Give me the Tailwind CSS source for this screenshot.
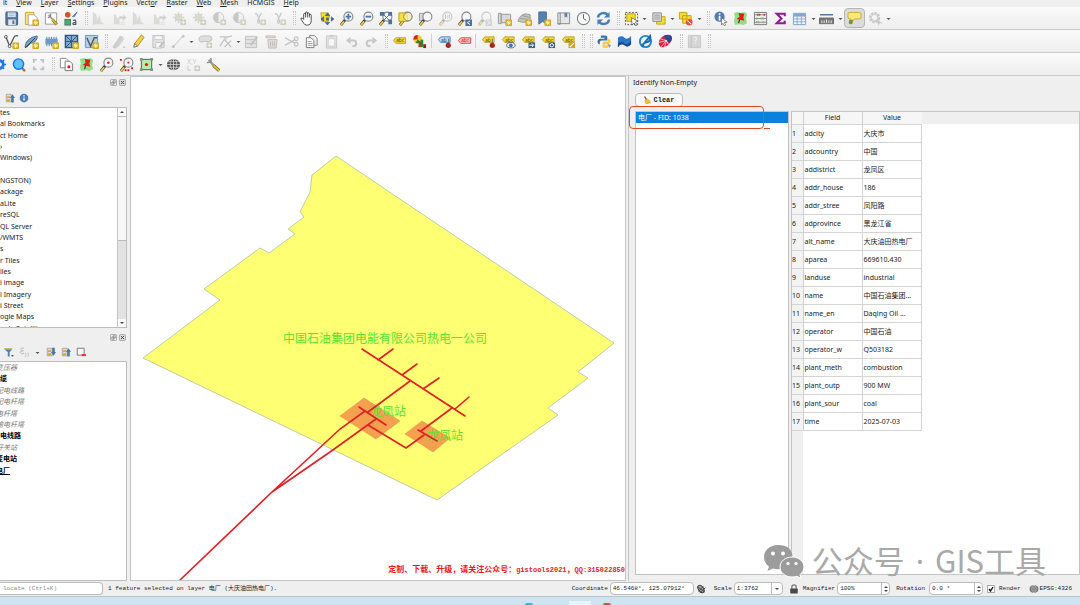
<!DOCTYPE html>
<html lang="en">

<head>
    <meta charset="UTF-8">
    <meta name="viewport" content="width=device-width, initial-scale=1.0">
    <title>QGIS - Identify Non-Empty</title>
    <script src="https://cdn.jsdelivr.net/npm/@tailwindcss/browser@4"></script>
</head>

<body class="relative flex h-screen flex-col overflow-hidden bg-[#efefef] font-['Noto_Sans','Noto_Sans_CJK_SC',sans-serif] text-[7px] leading-[11px] text-[#222]">
    <!-- Icon sprite -->
    <svg class="hidden" xmlns="http://www.w3.org/2000/svg">
        <g id="new"><rect x="9" y="9" width="7" height="7" rx="1" fill="#d0a91c" /><path d="M12.500 10v5M10 12.500h5M10.800 10.800l3.400 3.400M14.200 10.800l-3.400 3.400" stroke="#fff3a8" stroke-width="1" /></g>
        <g id="plus"><rect x="9" y="9" width="6" height="6" rx="1" fill="#8d9a70" /><path d="M12 10v4M10 12h4" stroke="#fff" /></g>
        <g id="lens"><path d="M7 9L2 15" stroke="#3b3b3b" stroke-width="3" /><path d="M5.500 11L2 15" stroke="#e8c53c" stroke-width="2" /><circle cx="10" cy="6" r="4.800" fill="#f3f6f8" stroke="#888" stroke-width="1.200" /></g>

        <symbol id="save" viewBox="0 0 16 16"><rect x="2" y="1" width="12.500" height="14" rx="1" fill="#54789d" stroke="#3c5c7e" /><rect x="4" y="1.500" width="8.500" height="5" fill="#dce9f5" /><path d="M5 3h6M5 5h6" stroke="#88a" stroke-width=".6" /><rect x="4.500" y="9" width="8" height="6" fill="#e4e4e4" /><rect x="9" y="10" width="2" height="4" fill="#54789d" /></symbol>
        <symbol id="newlayout" viewBox="0 0 16 16"><path d="M1.500 1.500h9v13h-9z" fill="#fbe37c" stroke="#cfa41e" /><path d="M4.500 4h6l3.500 3v8h-9.500z" fill="#fff" stroke="#a5a5a5" /><use href="#new" /></symbol>
        <symbol id="layoutmgr" viewBox="0 0 16 16"><path d="M1.500 2h12v12h-12z" fill="#fff" stroke="#999" /><path d="M5 4l5 6" stroke="#8a8a8a" stroke-width="1.600" /><path d="M7 3q1 3-3 4" fill="none" stroke="#888" stroke-width="1.300" /><path d="M9 9l4.500 5.500" stroke="#6a5a20" stroke-width="3" /><path d="M9 9l4.500 5.500" stroke="#dfb92c" stroke-width="2" /></symbol>
        <symbol id="style" viewBox="0 0 16 16"><circle cx="4" cy="4" r="3" fill="#cf5722" /><path d="M9 6q1-1 5-5l-3 5z" fill="#5b7fa7" stroke="#5b7fa7" /><rect x="1" y="9" width="6" height="6" fill="#56a677" stroke="#3a7e58" /><path d="M9.500 10q3-1 3 1v4M12.500 12q-3 0-3 1.500t3 .5" fill="none" stroke="#555" stroke-width="1.300" /></symbol>
        <symbol id="hist" viewBox="0 0 16 16"><path d="M2 2v12h12L10 12 8 4 6 9 4 3z" fill="#b5bda8" /><path d="M1.500 1v14" stroke="#aaa" /></symbol>
        <symbol id="hist2" viewBox="0 0 16 16"><path d="M2 4v10h6V6L6 8 4 4z" fill="#b5bda8" /><path d="M8 6h5l-1-2 3 3-3 3v-2H8zM8 14h6M8 12h6" fill="#999" stroke="#999" stroke-width=".5" /></symbol>
        <symbol id="sun" viewBox="0 0 16 16"><g stroke="#a9a88e"><path d="M7 1v12M1 7h12M3 3l8 8M11 3l-8 8" stroke-width="1.500" /><circle cx="7" cy="7" r="3.500" fill="#b3b28f" /></g><use href="#plus" /></symbol>
        <symbol id="contrast" viewBox="0 0 16 16"><circle cx="7" cy="7" r="5.500" fill="#eee" stroke="#888" /><path d="M7 1.500a5.500 5.500 0 000 11z" fill="#888" /><use href="#plus" /></symbol>
        <symbol id="gamma" viewBox="0 0 16 16"><path d="M3 3q3-1 4 5l3-6M7 8q-2 5 0 5t0-5" fill="none" stroke="#888" stroke-width="1.300" /><use href="#plus" /></symbol>
        <symbol id="hand" viewBox="0 0 16 16"><path d="M5 9V3.500q0-1 1-1t1 1V2q0-1 1-1t1 1v1q0-1 1-1t1 1v1.500q0-1 1-1t1 1V10q0 5-4 5H8q-2 0-3-2L2 8.500q0-1.500 1.500-1z" fill="#fff" stroke="#333" stroke-width=".9" /><path d="M7 3v4M9 3v4M11 4v3" stroke="#333" stroke-width=".8" /></symbol>
        <symbol id="panto" viewBox="0 0 16 16"><path d="M2 2h8l1 3-1 6H3z" fill="#f9e02c" stroke="#c2a71c" /><path d="M9 2l2.500 3h-5zM9 15l2.500-3h-5zM2 8.500L5 6v5zM16 8.500L13 6v5z" fill="#44638d" stroke="#2e4f7b" stroke-width=".5" /><rect x="7.500" y="7" width="3" height="3" fill="#44638d" /></symbol>
        <symbol id="zoomin" viewBox="0 0 16 16"><use href="#lens" /><path d="M10 3v6M7 6h6" stroke="#4a79ae" stroke-width="2" /></symbol>
        <symbol id="zoomout" viewBox="0 0 16 16"><use href="#lens" /><path d="M7 6h6" stroke="#4a79ae" stroke-width="2" /></symbol>
        <symbol id="zoomfull" viewBox="0 0 16 16"><use href="#lens" /><path d="M2 1h5v4H2zM11 1h4v4h-4zM11 9h4v5h-4z" fill="#4c719c" /><path d="M5 3l8 8M13 3L6 10" stroke="#4c719c" /></symbol>
        <symbol id="zoomsel" viewBox="0 0 16 16"><use href="#lens" /><path d="M1 2h9v9H1z" fill="#f8df3a" stroke="#b89f1d" /><circle cx="10.500" cy="6" r="4.500" fill="#f8ecaa" fill-opacity=".8" stroke="#888" /></symbol>
        <symbol id="zoomlayer" viewBox="0 0 16 16"><path d="M1.500 2.500h8v8h-8z" fill="#d9d9d9" stroke="#999" /><use href="#lens" /></symbol>
        <symbol id="zoomnative" viewBox="0 0 16 16"><use href="#lens" /><path d="M8 4v4M12 4v4M10 5v1M10 7v1" stroke="#666" /></symbol>
        <symbol id="zoomlast" viewBox="0 0 16 16"><use href="#lens" /><rect x="9" y="9" width="7" height="7" fill="#4c719c" /><path d="M14 10.500l-3 2 3 2" fill="none" stroke="#fff" /></symbol>
        <symbol id="zoomnext" viewBox="0 0 16 16"><use href="#lens" /><rect x="9" y="9" width="7" height="7" fill="#aaa" /><path d="M11 10.500l3 2-3 2" fill="none" stroke="#fff" /></symbol>
        <symbol id="newmap" viewBox="0 0 16 16"><path d="M1.500 2.500h3v11h-3zM4.500 3.500h10v9h-10z" fill="#dadada" stroke="#999" /><use href="#new" /></symbol>
        <symbol id="new3d" viewBox="0 0 16 16"><path d="M1 11q2-7 8-8l5 1v8H6z" fill="#c6c6c0" stroke="#999" /><path d="M3 8l9 1M6 5l8 2" stroke="#999" /><use href="#new" /></symbol>
        <symbol id="newbook" viewBox="0 0 16 16"><path d="M3 1h8v13l-4-3-4 3z" fill="#5682b1" stroke="#416a96" /><use href="#new" /></symbol>
        <symbol id="books" viewBox="0 0 16 16"><path d="M2 2h2.500v12H2zM4.500 2h10v11.500H2" fill="#e6e6e6" stroke="#888" /><path d="M9 2h3v5l-1.500-1L9 7z" fill="#5682b1" /></symbol>
        <symbol id="clock" viewBox="0 0 16 16"><circle cx="8" cy="8" r="6.500" fill="#f8f8f8" stroke="#7d8790" stroke-width="1.200" /><path d="M8 3.500V8l3 2" fill="none" stroke="#555" /></symbol>
        <symbol id="refresh" viewBox="0 0 16 16"><path d="M2 7a6 6 0 0111-2M14 9a6 6 0 01-11 2" fill="none" stroke="#4a7fb8" stroke-width="2.500" /><path d="M14.500 1v6h-6zM1.500 15V9h6z" fill="#4a7fb8" /></symbol>
        <symbol id="select" viewBox="0 0 16 16"><path d="M1.500 1.500h13v13h-13z" fill="none" stroke="#555" stroke-dasharray="2 1.500" /><path d="M3 3h9v8H3z" fill="#f7dd2b" stroke="#b89f1d" /><path d="M8 7l7 4-3 .8 2 3-1.500 1-1.800-3L8.500 15z" fill="#fff" stroke="#444" stroke-width=".7" /></symbol>
        <symbol id="selval" viewBox="0 0 16 16"><path d="M6 6h9v8H6z" fill="#f7dd2b" stroke="#c0a51d" /><path d="M2 2h9v9H2z" fill="#ddd" stroke="#888" /><path d="M3.500 4.500h6M3.500 6.500h6M3.500 8.500h6" stroke="#999" /></symbol>
        <symbol id="desel" viewBox="0 0 16 16"><path d="M1.500 1.500h8v7h-8zM5 5h9v8H5z" fill="#f7dd2b" stroke="#bf9d1c" /><circle cx="12" cy="12" r="3.500" fill="#e34b42" /><path d="M10 10l4 4" stroke="#fff" stroke-width="1.200" /></symbol>
        <symbol id="identify" viewBox="0 0 16 16"><circle cx="7" cy="6" r="5.500" fill="#517eae" /><path d="M7 5v5M7 2.500v1.500" stroke="#fff" stroke-width="1.800" /><path d="M9 7l6 5-3 .4 1.500 2.500-1.500.8-1.400-2.600L9 15z" fill="#fff" stroke="#555" stroke-width=".7" /></symbol>
        <symbol id="pin" viewBox="0 0 16 16"><path d="M1 2l4-1 3 1 4-1 3 2-1 5 1 5-4 2-4-1-5 1-1-5 1-3z" fill="#98dc86" /><path d="M6 2l6 1-1 4 1 3.500-8-2 3-2.500z" fill="#e31c13" /><path d="M7 9l-1 4" stroke="#333" stroke-width="1.200" /></symbol>
        <symbol id="abacus" viewBox="0 0 16 16"><path d="M1.500 1.500h13v13h-13z" fill="#eee" stroke="#777" /><path d="M2 4h12M2 8h12M2 12h12" stroke="#888" /><path d="M5 3v2M7 3v2M12 3v2" stroke="#df3b31" stroke-width="1.600" /><path d="M4 7v2M9 7v2M11 7v2M4 11v2M6 11v2M11 11v2" stroke="#8aab85" stroke-width="1.500" /></symbol>
        <symbol id="sigma" viewBox="0 0 16 16"><path d="M12.500 5.500V3H4l5 5-5 5h8.500v-2.500" fill="none" stroke="#8e1b91" stroke-width="2.200" /></symbol>
        <symbol id="table" viewBox="0 0 16 16"><path d="M1.500 2.500h13v12h-13z" fill="#f4f8fc" stroke="#7f9dbd" /><path d="M2 3h12v3H2z" fill="#7fa7d2" /><path d="M2 8.500h12M2 11.500h12M5.500 6v8M10 6v8" stroke="#7fa7d2" /></symbol>
        <symbol id="ruler" viewBox="0 0 16 16"><path d="M1 4h14" stroke="#4e6f96" stroke-width="1.500" /><path d="M.5 7.500h15v6H.5z" fill="#777" stroke="#666" /><path d="M3 10v3M5.500 10v3M8 9v4M10.500 10v3M13 10v3" stroke="#eee" /></symbol>
        <symbol id="tip" viewBox="0 0 16 16"><path d="M3 1.500h10q2 0 2 2v3q0 2-2 2H8l-4 5V8.500H3q-2 0-2-2v-3q0-2 2-2z" fill="#fbe879" stroke="#c9a527" /><path d="M2 10l4-1v4q-2 2-4 0z" fill="#70904b" /></symbol>
        <symbol id="gear" viewBox="0 0 16 16"><circle cx="7" cy="7" r="4.500" fill="none" stroke="#888" stroke-width="3" stroke-dasharray="2.400 1" /><circle cx="7" cy="7" r="3.500" fill="none" stroke="#999" /><path d="M9 8l6 5-3 .3-1 2.500z" fill="#888" /></symbol>

        <symbol id="newvec" viewBox="0 0 16 16"><path d="M2 3l4 10L11 3q1-2 4-1" fill="none" stroke="#555" stroke-width="1.400" /><circle cx="2" cy="3" r="1.500" fill="#fff" stroke="#555" /><circle cx="6" cy="13" r="1.500" fill="#fff" stroke="#555" /><use href="#new" /></symbol>
        <symbol id="feather" viewBox="0 0 16 16"><path d="M1 14Q2 4 14 2q1 6-7 8L3 14z" fill="#7ba0c7" stroke="#426b96" /><path d="M1 15L12 4" stroke="#345" /><use href="#new" /></symbol>
        <symbol id="chip" viewBox="0 0 16 16"><path d="M3 3v10M5.500 3v10M8 3v10M10.500 3v10M13 3v10" stroke="#5580ae" /><rect x="1.500" y="5" width="13" height="6" fill="#6c99c9" /><use href="#new" /></symbol>
        <symbol id="mesh" viewBox="0 0 16 16"><path d="M1.500 1.500h13v13h-13z" fill="#7fa8d2" stroke="#35587f" stroke-width="1.500" /><path d="M1 8h13M8 1v13M2 14L14 2M2 2l6 6" stroke="#35587f" /><use href="#new" /></symbol>
        <symbol id="virt" viewBox="0 0 16 16"><path d="M1.500 1.500h13v13h-13z" fill="#b6cfe7" stroke="#6e94bb" /><path d="M3 4l4 9 4-9h3" fill="none" stroke="#556" stroke-width="1.500" /><use href="#new" /></symbol>
        <symbol id="pencils" viewBox="0 0 16 16"><path d="M2 14L10 2l3 2-8 11zM7 14l7-9" fill="#999" stroke="#888" /><path d="M13 14h2" stroke="#555" /></symbol>
        <symbol id="pencil" viewBox="0 0 16 16"><path d="M3 14l1-4L11 1l3 2.500L7 13z" fill="#f1d243" stroke="#9a821f" stroke-width=".8" /><path d="M3 14l1-4 3 3z" fill="#eee" stroke="#444" stroke-width=".6" /></symbol>
        <symbol id="saveedit" viewBox="0 0 16 16"><path d="M2 1.500h12v13H2z" fill="#ccc" stroke="#777" /><path d="M4 2h8v4H4zM5 9h6v6H5z" fill="#fff" stroke="#888" /><path d="M9 14l5-6" stroke="#777" stroke-width="2" /></symbol>
        <symbol id="line" viewBox="0 0 16 16"><path d="M2 14L13 2" stroke="#777" /><circle cx="2.500" cy="13.500" r="1.500" fill="#777" /><circle cx="13" cy="2.500" r="1.500" fill="#777" /></symbol>
        <symbol id="addpoly" viewBox="0 0 16 16"><path d="M1 6q0-4 5-4h6q3 0 3 3t-4 3H7q-5 2-6-2z" fill="#bbb" stroke="#777" /><use href="#plus" /></symbol>
        <symbol id="vertex" viewBox="0 0 16 16"><path d="M2 13L8 4l7-2M2 3h9M7 6l7 8M7 14l7-7" fill="none" stroke="#777" stroke-width="1.300" /><circle cx="8" cy="4" r="2" fill="#999" /></symbol>
        <symbol id="form" viewBox="0 0 16 16"><path d="M1.500 2.500h12v12h-12z" fill="#ccc" stroke="#777" /><path d="M2 6h11M2 10h11" stroke="#777" /><path d="M7 12l7-9" stroke="#777" stroke-width="2" /></symbol>
        <symbol id="trash" viewBox="0 0 16 16"><path d="M2 2h10v2H2zM4 6h10l-1 9H5z" fill="#bbb" stroke="#866" /><path d="M7 8v5M9 8v5M11 8v5" stroke="#866" /></symbol>
        <symbol id="cut" viewBox="0 0 16 16"><path d="M1 4l11 6M1 12l11-6" stroke="#777" stroke-width="1.300" /><circle cx="13" cy="5" r="2" fill="none" stroke="#777" stroke-width="1.300" /><circle cx="13" cy="11" r="2" fill="none" stroke="#777" stroke-width="1.300" /></symbol>
        <symbol id="copy" viewBox="0 0 16 16"><path d="M6 1.500h5l3 3V12H6z" fill="#eee" stroke="#888" /><path d="M2.500 4h5l3 3v7.500h-8z" fill="#fff" stroke="#777" /><path d="M4 8h4M4 10h5M4 12h5" stroke="#999" /></symbol>
        <symbol id="paste" viewBox="0 0 16 16"><path d="M2.500 2h11v13h-11z" fill="#ccc" stroke="#888" /><path d="M4.500 5h7v8h-7z" fill="#fff" stroke="#999" /><path d="M6 1h4v2H6z" fill="#888" /></symbol>
        <symbol id="undo" viewBox="0 0 16 16"><path d="M5 7h5q3 0 3 3t-4 3" fill="none" stroke="#888" stroke-width="2.200" /><path d="M7 3v8L2 7z" fill="#888" /></symbol>
        <symbol id="redo" viewBox="0 0 16 16"><path d="M11 7H6q-3 0-3 3t4 3" fill="none" stroke="#888" stroke-width="2.200" /><path d="M9 3v8l5-4z" fill="#888" /></symbol>
        <symbol id="label" viewBox="0 0 16 16"><path d="M1.500 7l2.500-3h10.500v6H4z" fill="#f5d52f" stroke="#ae9425" stroke-width=".8" /><text x="4.500" y="9" font-size="5" fill="#444">abc</text></symbol>
        <symbol id="pie" viewBox="0 0 16 16"><circle cx="6" cy="5.500" r="4.500" fill="#f2cd20" /><path d="M6 5.500V1a4.500 4.500 0 00-4.500 5z" fill="#d22" /><path d="M6 5.500l-2 4a4.500 4.500 0 005-1z" fill="#178d34" /><path d="M7 8h3v6H7z" fill="#e11d1d" /><path d="M9 6h3v8H9z" fill="#149138" /><path d="M12 11h3v4h-3z" fill="#a10" /></symbol>
        <symbol id="labelblue" viewBox="0 0 16 16"><path d="M1.500 6L4 3h10v6H4z" fill="#b5d5f5" stroke="#5687bd" /><text x="4.500" y="8" font-size="5" fill="#444">ab</text><path d="M12.500 5v6" stroke="#666" /><circle cx="12" cy="12" r="2.800" fill="#a92722" /></symbol>
        <symbol id="labelred" viewBox="0 0 16 16"><path d="M1.500 7l2.500-3h10.500v6H4z" fill="#fbb" stroke="#ee4545" /><text x="4.500" y="9" font-size="5" fill="#c22">abc</text></symbol>
        <symbol id="labelpin" viewBox="0 0 16 16"><path d="M1.500 6L4 3h10v6H4z" fill="#f5d52f" stroke="#ae9425" stroke-width=".8" /><text x="4.500" y="8" font-size="5" fill="#444">ab</text><path d="M12 5v6" stroke="#666" /><circle cx="12" cy="12" r="2.800" fill="#a92722" /></symbol>
        <symbol id="labeleye" viewBox="0 0 16 16"><path d="M1.500 6L4 3h10v6H4z" fill="#f5d52f" stroke="#ae9425" stroke-width=".8" /><text x="4.500" y="8" font-size="5" fill="#444">abc</text><ellipse cx="10.500" cy="12" rx="4.500" ry="2.800" fill="#fff" stroke="#49627d" /><circle cx="10.500" cy="12" r="2" fill="#3d73a8" /></symbol>
        <symbol id="labelmove" viewBox="0 0 16 16"><path d="M1.500 6L4 3h10v6H4z" fill="#f5d52f" stroke="#ae9425" stroke-width=".8" /><text x="4.500" y="8" font-size="5" fill="#444">abc</text><path d="M8 9h7v6H8z" fill="#43617f" /><path d="M9 12h4M11.500 10l2 2-2 2" fill="none" stroke="#fff" /></symbol>
        <symbol id="labelrot" viewBox="0 0 16 16"><path d="M1.500 6L4 3h10v6H4z" fill="#f5d52f" stroke="#ae9425" stroke-width=".8" /><text x="4.500" y="8" font-size="5" fill="#444">abc</text><path d="M8 9h7v6H8z" fill="#43617f" /><circle cx="11.500" cy="12" r="1.800" fill="none" stroke="#fff" /></symbol>
        <symbol id="labeledit" viewBox="0 0 16 16"><path d="M1.500 6L4 3h10v6H4z" fill="#f5d52f" stroke="#ae9425" stroke-width=".8" /><text x="4.500" y="8" font-size="5" fill="#444">abc</text><path d="M8 9h7v6H8z" fill="#cfa61b" /><path d="M9.500 14l4-4" stroke="#fff" stroke-width="1.500" /></symbol>
        <symbol id="python" viewBox="0 0 16 16"><path d="M5 1.500h4q2 0 2 2V7H5Q3 7 3 9v2H2q-1.500-1-1.500-3T2.500 5H8V4H4V3q0-1.500 1-1.500z" fill="#3b74a8" /><path d="M12 5h1q1.500 1 1.500 3T12 11H8v1h4v1q0 2-3 2t-3-2V9.500Q6 8 8 8h2q2 0 2-2z" fill="#f9cf3b" /><path d="M11 10l4 2-2 3z" fill="#999" /></symbol>
        <symbol id="wave" viewBox="0 0 16 16"><path d="M1 4q4-3 7 0t7-2v9q-3 4-7 1T1 14z" fill="#2a78c5" /><path d="M1 10q4-3 7 0t7-3v4q-3 4-7 1T1 14z" fill="#174a8d" /></symbol>
        <symbol id="swirl" viewBox="0 0 16 16"><circle cx="8" cy="8" r="7" fill="#2585c5" /><circle cx="8" cy="8" r="5" fill="#e6f3fb" /><path d="M4 13L13 2Q14 8 9 9t-3 4" fill="none" stroke="#1d6cab" stroke-width="2" /></symbol>
        <symbol id="burst" viewBox="0 0 16 16"><path d="M1 8Q4 0 13 1q4 3 0 8-4 6-10 5Q0 12 1 8z" fill="#d9233e" /><path d="M6 2q4-2 8 0 2 3-1 7L9 7z" fill="#284b9c" /><path d="M9 7L1 9M9 7L3 14M9 7L7 14M9 7L2 5M9 7l2 4" stroke="#fff" stroke-width=".7" /></symbol>
        <symbol id="help" viewBox="0 0 16 16"><path d="M1.500 1.500h3v13h-3zM4.500 1.500h10v13h-10z" fill="#aaa" stroke="#888" /><text x="7" y="11" font-size="9" fill="#fff">?</text></symbol>

        <symbol id="cog" viewBox="0 0 16 16"><circle cx="8" cy="8" r="4" fill="none" stroke="#2279e3" stroke-width="3" /><path d="M8 1v14M1 8h14M3 3l10 10M13 3L3 13" stroke="#2279e3" stroke-width="1.500" stroke-dasharray="2.500 9 2.500" /></symbol>
        <symbol id="search" viewBox="0 0 16 16"><path d="M11 11l4 4" stroke="#9a7659" stroke-width="2.500" /><circle cx="8" cy="7.500" r="5.500" fill="#5cc2fb" stroke="#1677dc" stroke-width="1.500" /></symbol>
        <symbol id="frame" viewBox="0 0 16 16"><path d="M3 6V3h3M10 3h3v3M13 10v3h-3M6 13H3v-3" fill="none" stroke="#b9c4c9" stroke-width="2" /></symbol>
        <symbol id="pages" viewBox="0 0 16 16"><path d="M1.500 1.500h6l2 2v8h-8z" fill="#fff" stroke="#888" /><path d="M6.500 4.500h5l3 3v7h-8z" fill="#fff" stroke="#777" /><circle cx="10.500" cy="10.500" r="1.600" fill="#e11" /></symbol>
        <symbol id="lensdot" viewBox="0 0 16 16"><use href="#lens" /><circle cx="10" cy="6" r="1.300" fill="#e11" /></symbol>
        <symbol id="lensdots" viewBox="0 0 16 16"><use href="#lens" /><path d="M9 5h2v2H9zM1 2h2v2H1zM13 11h2v2h-2zM9 13h2v2H9zM6 13h2v2H6z" fill="#e11" /></symbol>
        <symbol id="extent" viewBox="0 0 16 16"><path d="M2.500 2.500h11v11h-11z" fill="#b8eba8" stroke="#555" /><path d="M1 1h3v3H1zM12 1h3v3h-3zM1 12h3v3H1zM12 12h3v3h-3z" fill="#7d9c74" /><circle cx="8" cy="8" r="1.700" fill="#e11" /></symbol>
        <symbol id="globe" viewBox="0 0 16 16"><ellipse cx="8" cy="8" rx="7" ry="6" fill="#555" /><path d="M1 8h14M2 5h12M2 11h12M8 1v14" stroke="#ddd" stroke-width=".8" /><ellipse cx="8" cy="8" rx="3.500" ry="6" fill="none" stroke="#ddd" stroke-width=".8" /></symbol>
        <symbol id="xy" viewBox="0 0 16 16"><text x="1" y="7" font-size="7.500" fill="#888">X,Y</text><path d="M2 9v5h3" fill="none" stroke="#999" /><use href="#plus" /></symbol>
        <symbol id="wrench" viewBox="0 0 16 16"><path d="M3 3l6 7" stroke="#999" stroke-width="2.500" /><path d="M5 1q2 5-4 5" fill="none" stroke="#888" stroke-width="1.500" /><path d="M8 9l6 5.500" stroke="#6e6434" stroke-width="3.500" /><path d="M8 9l6 5.500" stroke="#e5bd35" stroke-width="2" /></symbol>

        <symbol id="funnel" viewBox="0 0 16 16"><path d="M1 2h12v2L9 8v7H6V8L1 4z" fill="#4f80b5" /><path d="M1 2h12v2H1z" fill="#e8ca3e" /><path d="M12 14h3" stroke="#333" stroke-width="2" /></symbol>
        <symbol id="expr" viewBox="0 0 16 16"><path d="M8 2Q2 1 3 4t4 2Q1 6 2 9t6 1" fill="none" stroke="#666" stroke-width="1.500" /><path d="M9 10h2v5H9M13 10h2v5h-2" stroke="#666" fill="none" /></symbol>
        <symbol id="expand" viewBox="0 0 16 16"><path d="M2 2h8v12H2z" fill="#ddd" stroke="#888" /><path d="M3 5h5v3H3zM3 10h5v3H3z" fill="#e5a52c" /><path d="M10 1h4v7h2l-4 6-4-6h2z" fill="#4876a8" /></symbol>
        <symbol id="collapse" viewBox="0 0 16 16"><path d="M2 2h8v12H2z" fill="#ddd" stroke="#888" /><path d="M3 5h5v3H3zM3 10h5v3H3z" fill="#e5a52c" /><path d="M10 15h4V8h2l-4-6-4 6h2z" fill="#4876a8" /></symbol>
        <symbol id="removelayer" viewBox="0 0 16 16"><path d="M2 2h11v11H2z" fill="#f7f7f7" stroke="#777" stroke-width="1.500" /><path d="M9 13h7" stroke="#e03434" stroke-width="3" /></symbol>
        <symbol id="info" viewBox="0 0 16 16"><circle cx="8" cy="8" r="7" fill="#4c7fb5" /><path d="M8 7v5M8 3.500v2" stroke="#fff" stroke-width="2" /></symbol>
        <symbol id="broom" viewBox="0 0 16 16"><path d="M3 1l4 6" stroke="#8b3413" stroke-width="2.500" /><path d="M4 8l5-2q5 3 6 7l-8 3q-3-3-3-8z" fill="#f3c42f" stroke="#a9831c" /></symbol>
        <symbol id="float" viewBox="0 0 16 16"><rect x="1" y="1" width="14" height="14" rx="3" fill="#eee" stroke="#888" stroke-width="1.500" /><path d="M7 4h5v5H7zM4 7h5v5H4z" fill="#eee" stroke="#777" stroke-width="1.500" /></symbol>
        <symbol id="close" viewBox="0 0 16 16"><rect x="1" y="1" width="14" height="14" rx="3" fill="#ddd" stroke="#888" stroke-width="1.500" /><path d="M4.500 4.500l7 7M11.500 4.500l-7 7" stroke="#444" stroke-width="2.200" /></symbol>
        <symbol id="mouse" viewBox="0 0 16 16"><ellipse cx="8" cy="8" rx="4" ry="6.500" transform="rotate(-35 8 8)" fill="#aaa" stroke="#333" stroke-width="1.500" /><path d="M2 4l12 9M4 12l8-9M6 14l9-8" stroke="#333" stroke-width="1.300" /></symbol>
        <symbol id="lock" viewBox="0 0 16 16"><path d="M4.500 8V5q0-3.500 3.500-3.500T11.500 5v3" fill="none" stroke="#777" stroke-width="2" /><rect x="2" y="7" width="12" height="8" rx="1" fill="#484848" /></symbol>
    </svg>

    <nav class="flex h-[7px] shrink-0 items-end gap-[9px] overflow-hidden pl-[3px] text-[7px] leading-[9px]">
        <a href="#">it</a>
        <a href="#"><u>V</u>iew</a>
        <a href="#"><u>L</u>ayer</a>
        <a href="#"><u>S</u>ettings</a>
        <a href="#"><u>P</u>lugins</a>
        <a href="#">Vect<u>o</u>r</a>
        <a href="#"><u>R</u>aster</a>
        <a href="#"><u>W</u>eb</a>
        <a href="#"><u>M</u>esh</a>
        <a href="#">HCMGIS</a>
        <a href="#"><u>H</u>elp</a>
    </nav>

    <!-- Toolbars, filled by the script -->
    <div id="toolbars" class="shrink-0"></div>

    <main class="flex min-h-0 flex-1">
        <!-- Browser and layers docks -->
        <aside class="flex w-[127px] shrink-0 flex-col">
            <section class="flex h-[252px] shrink-0 flex-col">
                <div class="flex h-3 shrink-0 items-center justify-end gap-0.5 pr-px" data-dock></div>
                <div class="flex h-[19px] shrink-0 items-center gap-1 pl-[5px]" data-icons="collapse info"></div>
                <div class="flex min-h-0 flex-1 border border-l-0 border-[#bdbdbd] bg-white">
                    <div class="min-w-0 flex-1 overflow-hidden">
                        <ul id="browserTree" class="-mt-px grid h-[227px] auto-rows-fr whitespace-nowrap"></ul>
                    </div>
                    <div class="flex w-[9px] shrink-0 flex-col border-l border-[#c4c4c4] bg-[#e2e2e2]">
                        <button aria-label="Scroll up" class="flex h-2 items-center justify-center bg-[#fafafa]"><svg class="h-1 w-1" viewBox="0 0 4 4"><path d="M0 3l2-2 2 2z" fill="#444" /></svg></button>
                        <div class="h-[125px] border-y border-[#bbb] bg-[#f8f8f8]"></div>
                        <button aria-label="Scroll down" class="mt-auto flex h-2 items-center justify-center bg-[#fafafa]"><svg class="h-1 w-1" viewBox="0 0 4 4"><path d="M0 1l2 2 2-2z" fill="#444" /></svg></button>
                    </div>
                </div>
            </section>
            <section class="flex min-h-0 flex-1 flex-col pt-[3px]">
                <div class="flex h-3 shrink-0 items-center justify-end gap-0.5 pr-px" data-dock></div>
                <div class="flex h-[18px] shrink-0 items-center gap-[5px] pl-1" data-icons="funnel ~expr> expand collapse removelayer"></div>
                <div class="min-h-0 flex-1 overflow-hidden border border-l-0 border-[#bdbdbd] bg-white">
                    <ul id="layerTree" class="grid h-[114px] auto-rows-fr whitespace-nowrap"></ul>
                </div>
            </section>
        </aside>

        <!-- Map canvas -->
        <section class="relative ml-[3px] min-w-0 flex-1 border border-[#c4c4c4] bg-white">
            <svg class="absolute inset-0 h-full w-full" viewBox="131 77 494 503" preserveAspectRatio="xMidYMid slice">
                <path d="M336 156L614 343L578 372L588 378L548 408L558 415L437 500L143 358L220 300L204 289L260 248L269 253L295 234L288 229L304 217L300 212L310 192L312 175Z" fill="#ffff73" stroke="#b9cfa5" stroke-width="1" />
                <g fill="#f3a04f" stroke="#dc9a50" stroke-width=".6">
                    <path d="M364 398L400 421L376 439L340 416Z" />
                    <path d="M422 421L450 438L433 452L405 434Z" />
                </g>
                <g fill="#56e62e" font-size="12" font-weight="400">
                    <text x="283" y="343">中国石油集团电能有限公司热电一公司</text>
                    <text x="370" y="416">龙凤站</text>
                    <text x="427" y="440">龙凤站</text>
                </g>
                <g fill="none" stroke="#e01f26" stroke-width="1.600" stroke-linecap="round">
                    <path d="M362 349L465 416M378 360L393 349M402 375L417 364M423 389L439 378M455 409L469 397" />
                    <path d="M410 381L368 412M452 408L421 431M359 407L386 425M418 430L437 441" />
                    <path d="M368 425L406 448L424 435" />
                    <path d="M365 411L340 429L272 492L180 580M376 419L330 452L272 492" />
                </g>
            </svg>
            <p class="absolute right-0 bottom-1 text-[8px] font-bold whitespace-nowrap text-[#f01818]">定制、下载、升级，请关注公众号：<span class="font-['Liberation_Mono',monospace] text-[7px]">gistools2021</span>，<span class="font-['Liberation_Mono',monospace] text-[7px]">QQ:315022850</span></p>
        </section>

        <!-- Identify panel -->
        <section class="ml-0.5 flex w-[452px] shrink-0 flex-col border-l border-[#c4c4c4] pb-[6px]">
            <h2 class="shrink-0 pl-1 leading-[13px]">Identify Non-Empty</h2>
            <div class="shrink-0 pt-1 pl-1.5">
                <button class="flex h-[14px] w-12 items-center justify-center gap-0.5 rounded-sm border border-[#bbb] bg-[#f9f9f9] font-['Liberation_Mono',monospace] text-[7px] font-bold"><svg class="h-2 w-2"><use href="#broom" /></svg>Clear</button>
            </div>
            <div class="relative mt-1 flex min-h-0 flex-1 pl-1.5">
                <ul class="w-[154px] shrink-0 border border-[#c4c4c4] bg-white">
                    <li class="h-[11px] bg-[#0b80dc] pl-0.5 text-white">电厂 - FID: 1038</li>
                </ul>
                <div class="ml-[2px] min-w-0 flex-1 border border-[#c4c4c4] bg-white">
                    <div class="flex h-full bg-linear-to-r from-[#efefef] from-[11px] to-white to-[11px]">
                        <table class="h-px w-[130px] shrink-0 table-fixed border-collapse bg-white">
                            <thead>
                                <tr class="h-3 bg-[#f6f6f6]">
                                    <th class="w-[11px] border-r border-[#d0d0d0]"></th>
                                    <th class="w-[59px] border-r border-[#d0d0d0] font-normal">Field</th>
                                    <th class="font-normal">Value</th>
                                </tr>
                            </thead>
                            <tbody id="fields"></tbody>
                        </table>
                        <div class="h-3 flex-1 bg-[#efefef]"></div>
                    </div>
                </div>
                <!-- Highlight drawn round the picked feature -->
                <div class="absolute -top-[5px] left-0 h-[23px] w-[135px] rounded-sm border border-[#e04a25]"></div>
                <div class="absolute top-[17px] left-[135px] h-px w-1.5 bg-[#e04a25]"></div>
            </div>
        </section>
    </main>

    <footer class="flex h-4 shrink-0 items-center border-b border-[#bbc4ca] font-['Liberation_Mono','Noto_Sans_CJK_SC',monospace] text-[6px] whitespace-nowrap">
        <input aria-label="Locator" placeholder="locate (Ctrl+K)" class="h-[13px] w-[103px] rounded-r-sm border border-l-0 border-[#bbb] bg-white pl-[3px] placeholder:text-[#888]">
        <span class="ml-[5px]">1 feature selected on layer 电厂 (大庆油田热电厂).</span>
        <label for="coord" class="ml-auto">Coordinate</label>
        <input id="coord" value="46.5468°, 125.07912°" class="ml-0.5 h-[13px] w-[84px] rounded-sm border border-[#bbb] bg-white px-0.5">
        <svg class="ml-0.5 h-2.5 w-2.5"><use href="#mouse" /></svg>
        <label for="scale" class="ml-2">Scale</label>
        <span class="relative ml-0.5 flex">
            <select id="scale" class="h-[13px] w-[49px] appearance-none rounded-sm border border-[#bbb] bg-white px-0.5">
                <option>1:3762</option>
            </select>
            <span class="pointer-events-none absolute inset-y-0 right-0 flex w-3 items-center justify-center border-l border-[#bbb]"><svg class="h-1 w-1" viewBox="0 0 4 4"><path d="M0 1h4L2 3z" fill="#444" /></svg></span>
        </span>
        <svg class="ml-1.5 h-2.5 w-2.5"><use href="#lock" /></svg>
        <label for="magnifier" class="ml-1">Magnifier</label>
        <span class="relative ml-0.5 flex">
            <input id="magnifier" value="100%" class="h-[13px] w-[53px] rounded-sm border border-[#bbb] bg-white px-0.5">
            <span class="pointer-events-none absolute inset-y-0 right-0 flex w-[9px] items-center justify-center border-l border-[#bbb]"><svg class="h-2 w-1" viewBox="0 0 4 8"><path d="M0 3h4L2 1zM0 5h4L2 7z" fill="#444" /></svg></span>
        </span>
        <label for="rotation" class="ml-1.5">Rotation</label>
        <span class="relative ml-1 flex">
            <input id="rotation" value="0.0 °" class="h-[13px] w-[54px] rounded-sm border border-[#bbb] bg-white px-0.5">
            <span class="pointer-events-none absolute inset-y-0 right-0 flex w-[9px] items-center justify-center border-l border-[#bbb]"><svg class="h-2 w-1" viewBox="0 0 4 8"><path d="M0 3h4L2 1zM0 5h4L2 7z" fill="#444" /></svg></span>
        </span>
        <span class="relative ml-1 flex h-2 w-2">
            <input id="render" type="checkbox" checked class="peer h-2 w-2 appearance-none border border-[#aaa] bg-white">
            <svg class="pointer-events-none absolute inset-0 hidden h-2 w-2 peer-checked:block" viewBox="0 0 8 8"><path d="M2 4l1.500 2L6 2" fill="none" stroke="#111" stroke-width="1.400" /></svg>
        </span>
        <label for="render" class="ml-1">Render</label>
        <button class="mr-2 ml-2 flex items-center gap-px"><svg class="h-2.5 w-2.5"><use href="#globe" /></svg>EPSG:4326</button>
    </footer>

    <!-- Desktop taskbar edge -->
    <div class="flex h-2 shrink-0 items-end bg-[#cfe4f3]">
        <div class="mx-auto flex items-end gap-3 pl-14">
            <span class="h-0.5 w-2 rounded-t-full bg-[#39b9c6]"></span>
            <span class="ml-6 h-1 w-[22px] bg-[#e9f3fa]"></span>
            <span class="h-0.5 w-2 rounded-t-full bg-[#d2504c]"></span>
        </div>
    </div>

    <!-- Account watermark -->
    <div class="pointer-events-none absolute right-[34px] bottom-[26px] flex items-center gap-2 font-['Noto_Sans_CJK_SC',sans-serif] text-[31px] leading-9 whitespace-nowrap text-[#a9a9a9]">
        <svg class="h-9 w-[41px]" viewBox="0 0 41 36" fill="#9c9c9c">
            <path d="M15 2C7 2 1 7 1 14q0 6 5 9.500L4.500 28l5.500-2.500q4 1 8 .5Q29 24 29.500 14 29 2 15 2z" />
            <path d="M29 14c-7 0-12 4.500-12 10s5 10 12 10q3 0 5-.8l4 2.300-1-3.800q4-3 4-7.700c0-5.500-5-10-12-10z" stroke="#fff" stroke-width="1" />
            <g fill="#fff"><circle cx="10" cy="10.500" r="2" /><circle cx="20" cy="10.500" r="2" /><circle cx="25" cy="20.500" r="1.600" /><circle cx="33" cy="20.500" r="1.600" /></g>
        </svg>
        <span>公众号 <span class="px-1 font-['Noto_Sans',sans-serif]">·</span> GIS工具</span>
    </div>

    <script>
        // A trailing ">" adds a drop-down arrow, "!" marks a pressed tool and "~" a disabled one
        const toolbars = [
            [
                ['w-[80px]', 'save newlayout layoutmgr style'], 'handle',
                ['w-[200px]', '~hist ~hist2 ~hist ~hist2 ~sun ~sun ~contrast ~contrast ~gamma ~gamma'], 'handle',
                ['w-[316px]', 'hand panto zoomin zoomout zoomfull zoomsel zoomlayer ~zoomnative zoomlast ~zoomnext newmap new3d newbook books clock refresh'], 'handle',
                ['w-[82px]', 'select> selval> desel>'], 'handle',
                ['w-[181px]', 'identify pin abacus sigma table> ruler> !tip ~gear>'],
            ],
            [
                ['w-[100px]', 'newvec feather chip mesh virt'], 'handle',
                ['w-[272px]', '~pencils pencil ~saveedit ~line> ~addpoly ~vertex> ~form ~trash ~cut copy ~paste ~undo ~redo'], 'handle',
                ['w-[41px]', 'label pie'], 'sep',
                ['w-[40px]', 'labelblue labelred'], 'sep',
                ['w-[100px]', 'labelpin labeleye labelmove labelrot labeledit'], 'handle', 'handle',
                ['w-[82px]', 'python wave swirl burst'], 'handle',
                ['w-[20px]', '~help'], 'handle',
            ],
            [
                ['w-[58px] -ml-[11px]', 'cog search frame'], 'handle',
                ['w-[168px]', 'pages pin lensdot lensdots extent> globe ~xy wrench'],
            ],
        ];

        const arrow = '<svg class="h-[7px] w-[7px] shrink-0" viewBox="0 0 7 7"><path d="M1.500 3h4l-2 2z" fill="#555" /></svg>';
        const handle = '<span class="mr-px ml-1 h-3.5 w-[3px] shrink-0 border-x border-dotted border-[#c4c4c4]"></span>';
        const sep = '<span class="mx-px h-3.5 w-0.5 shrink-0 border-l border-[#d0d0d0]"></span>';

        function toolButton(item, size) {
            const name = item.replace(/[~!>]/g, '');
            let cls = 'flex h-5 min-w-0 flex-1 items-center justify-center';
            if (size) cls = 'flex shrink-0 items-center';
            if (item.startsWith('~')) cls += ' opacity-40';
            if (item.startsWith('!')) cls += ' rounded-sm border border-[#b5b5b5] bg-[#dcdcdc]';
            const icon = `<button class="${cls}" aria-label="${name}"><svg class="${size || 'h-[15px] w-[15px]'} shrink-0"><use href="#${name}" /></svg></button>`;
            return icon + (item.endsWith('>') ? arrow : '');
        }

        document.getElementById('toolbars').innerHTML = toolbars.map(bar =>
            '<div class="flex h-[23px] items-center border-b border-[#c9c9c9] bg-linear-to-b from-[#fafafa] to-[#eeeeee] pl-px">' +
            bar.map(part => {
                if (part === 'handle') return handle;
                if (part === 'sep') return sep;
                return `<div class="flex shrink-0 items-center ${part[0]}">${part[1].split(' ').map(i => toolButton(i)).join('')}</div>`;
            }).join('') + '</div>').join('');

        document.querySelectorAll('[data-icons]').forEach(row => {
            row.innerHTML = row.dataset.icons.split(' ').map(i => toolButton(i, 'h-2.5 w-2.5')).join('');
        });
        document.querySelectorAll('[data-dock]').forEach(row => {
            row.innerHTML = toolButton('float', 'h-[7px] w-[7px]') + toolButton('close', 'h-[7px] w-[7px]');
        });

        const browserItems = ['tes', 'al Bookmarks', 'ct Home', '›', 'Windows)', '', 'NGSTON)', 'ackage', 'aLite', 'reSQL',
            'QL Server', '/WMTS', 's', 'r Tiles', 'iles', 'i image', 'i Imagery', 'i Street', 'ogle Maps', 'ogle Satellite'];
        document.getElementById('browserTree').innerHTML = browserItems.map(t => `<li>${t}</li>`).join('');

        const hiddenLayer = '-ml-1 text-[#777] italic';
        const shownLayer = 'font-bold text-black';
        const layers = [['变压器', hiddenLayer], ['缆', shownLayer], ['配电线路', hiddenLayer], ['配电杆塔', hiddenLayer], ['电杆塔', hiddenLayer],
            ['输电杆塔', hiddenLayer], ['电线路', shownLayer], ['开关站', hiddenLayer], ['变电站', '-ml-1 font-bold text-black'], ['电厂', '-ml-1 font-bold text-black underline']];
        document.getElementById('layerTree').innerHTML = layers.map(([t, cls]) => `<li class="${cls}">${t}</li>`).join('');

        const fields = [['adcity', '大庆市'], ['adcountry', '中国'], ['addistrict', '龙凤区'], ['addr_house', '186'], ['addr_stree', '凤阳路'],
            ['adprovince', '黑龙江省'], ['alt_name', '大庆油田热电厂'], ['aparea', '669610.430'], ['landuse', 'industrial'], ['name', '中国石油集团...'],
            ['name_en', 'Daqing Oil ...'], ['operator', '中国石油'], ['operator_w', 'Q503182'], ['plant_meth', 'combustion'],
            ['plant_outp', '900 MW'], ['plant_sour', 'coal'], ['time', '2025-07-03']];
        document.getElementById('fields').innerHTML = fields.map(([field, value], i) => `
            <tr class="h-[18px] border-y border-[#d4d4d4]">
                <th class="border-r border-[#d0d0d0] bg-[#f3f3f3] text-left font-normal whitespace-nowrap">${i + 1}</th>
                <td class="border-r border-[#d4d4d4] pl-px whitespace-nowrap">${field}</td>
                <td class="border-r border-[#d4d4d4] pl-px whitespace-nowrap">${value}</td>
            </tr>`).join('');
    </script>
</body>

</html>
